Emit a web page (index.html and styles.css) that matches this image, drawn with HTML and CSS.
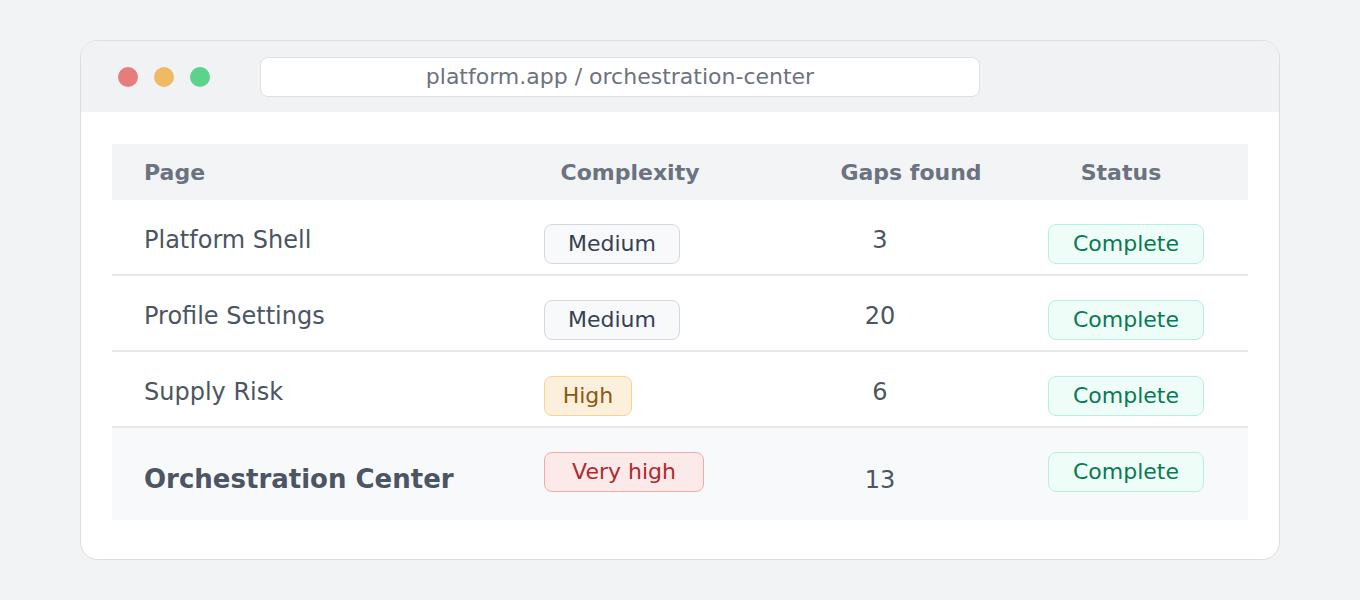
FILE: index.html
```html
<!DOCTYPE html>
<html lang="en">
<head>
<meta charset="utf-8">
<title>Orchestration Center</title>
<link rel="stylesheet" href="styles.css">
</head>
<body>
<div class="window">
  <div class="titlebar">
    <div class="dots">
      <span class="dot red"></span>
      <span class="dot yellow"></span>
      <span class="dot green"></span>
    </div>
    <div class="url">platform.app / orchestration-center</div>
  </div>
  <div class="content">
    <div class="table">
      <div class="row head">
        <div class="th th-page">Page</div>
        <div class="th th-cx">Complexity</div>
        <div class="th th-gaps">Gaps found</div>
        <div class="th th-status">Status</div>
      </div>
      <div class="row">
        <div class="td page">Platform Shell</div>
        <div class="td cx"><span class="badge medium">Medium</span></div>
        <div class="td gaps">3</div>
        <div class="td status"><span class="badge complete">Complete</span></div>
      </div>
      <div class="row">
        <div class="td page">Profile Settings</div>
        <div class="td cx"><span class="badge medium">Medium</span></div>
        <div class="td gaps">20</div>
        <div class="td status"><span class="badge complete">Complete</span></div>
      </div>
      <div class="row">
        <div class="td page">Supply Risk</div>
        <div class="td cx"><span class="badge high">High</span></div>
        <div class="td gaps">6</div>
        <div class="td status"><span class="badge complete">Complete</span></div>
      </div>
      <div class="row current">
        <div class="td page">Orchestration Center</div>
        <div class="td cx"><span class="badge veryhigh">Very high</span></div>
        <div class="td gaps">13</div>
        <div class="td status"><span class="badge complete">Complete</span></div>
      </div>
    </div>
  </div>
</div>
</body>
</html>
```

FILE: styles.css
```css
* { box-sizing: border-box; }

html, body {
  margin: 0;
  padding: 0;
}

body {
  background: #f2f3f5;
  font-family: "DejaVu Sans", "Liberation Sans", sans-serif;
  padding: 40px 80px;
}

.window {
  width: 1200px;
  height: 520px;
  background: #ffffff;
  border: 1px solid #dcdee3;
  border-radius: 18px;
  overflow: hidden;
}

.titlebar {
  height: 71px;
  background: #f1f2f4;
  display: flex;
  align-items: center;
  padding-left: 37px;
}

.dots {
  display: flex;
  gap: 16px;
}

.dot {
  width: 20px;
  height: 20px;
  border-radius: 50%;
  display: block;
}

.dot.red { background: #e67c7c; }
.dot.yellow { background: #f0b964; }
.dot.green { background: #5cd38b; }

.url {
  margin-left: 50px;
  width: 720px;
  height: 40px;
  background: #ffffff;
  border: 1px solid #dcdfe4;
  border-radius: 8px;
  display: flex;
  align-items: center;
  justify-content: center;
  font-size: 22px;
  color: #6b7280;
}

.content {
  padding: 32px 31px 0 31px;
}

.row {
  display: grid;
  grid-template-columns: 400px 272px 232px 232px;
  align-items: start;
  padding: 24px 0 10px;
  border-bottom: 2px solid #e5e7eb;
  font-size: 24px;
  line-height: 28px;
  color: #4b5563;
}

.row.head {
  height: 56px;
  padding: 2px 0 0;
  border-bottom: none;
  background: #f3f4f6;
  align-items: center;
  font-size: 22px;
  font-weight: bold;
  color: #6b7280;
}

.th { text-align: center; }
.th-page { text-align: left; padding-left: 32px; }
.th-cx { padding-right: 36px; }
.th-gaps { padding-left: 22px; }
.th-status { padding-right: 22px; }

.td.page { padding-left: 32px; padding-top: 2px; }
.td.cx { padding-left: 32px; }
.td.gaps { text-align: center; padding-right: 40px; padding-top: 2px; }
.td.status { padding-left: 32px; }

.row.current {
  background: #f8f9fb;
  border-bottom: none;
  height: 92px;
  padding-bottom: 0;
}

.row.current .td.page {
  font-size: 26px;
  line-height: 30px;
  font-weight: bold;
  padding-top: 12px;
}

.row.current .td.gaps {
  padding-top: 14px;
}

.badge {
  display: inline-block;
  font-size: 22px;
  line-height: 24px;
  padding: 7px 0;
  border: 1px solid;
  border-radius: 8px;
  text-align: center;
}

.badge.medium {
  width: 136px;
  background: #f8f9fb;
  border-color: #d5d8de;
  color: #374151;
}

.badge.high {
  width: 88px;
  background: #fcefdc;
  border-color: #f6d28f;
  color: #8b5a12;
}

.badge.veryhigh {
  width: 160px;
  background: #fce9ea;
  border-color: #f1abab;
  color: #b1282c;
}

.badge.complete {
  width: 156px;
  background: #effdf9;
  border-color: #b2f1e1;
  color: #087a53;
}
```
